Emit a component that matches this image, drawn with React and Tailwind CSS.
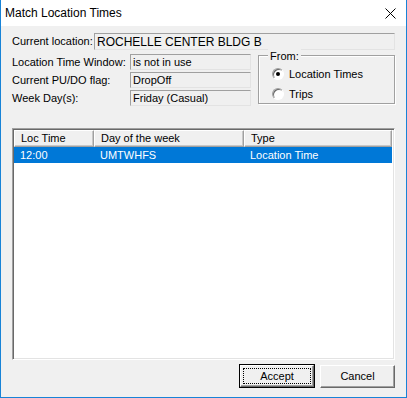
import React from 'react';

const font = { fontFamily: '"Liberation Sans", Arial, sans-serif' };

const Field = ({ value, className = '' }) => (
  <div className={`h-full border border-t-[#a0a0a0] border-l-[#a0a0a0] border-b-[#e3e3e3] border-r-[#e3e3e3] bg-[#f0f0f0] px-[2px] flex items-center leading-none ${className}`}>
    {value}
  </div>
);

const Radio = ({ checked, label }) => (
  <div className="flex items-center h-[16px]">
    <div className="w-[12px] h-[12px] rounded-full border border-t-[#a0a0a0] border-l-[#a0a0a0] border-b-white border-r-white bg-white shadow-[inset_1px_1px_0_#696969] flex items-center justify-center">
      {checked && <div className="w-[4px] h-[4px] rounded-full bg-black" />}
    </div>
    <span className="ml-[5px]">{label}</span>
  </div>
);

const HeaderCell = ({ label, className = '' }) => (
  <div className={`h-full border border-t-white border-l-white border-b-[#a0a0a0] border-r-[#a0a0a0] shadow-[inset_-1px_-1px_0_#c8c8c8] bg-[#f0f0f0] pl-[6px] flex items-center ${className}`}>
    {label}
  </div>
);

export default function App() {
  return (
    <div className="w-[407px] h-[398px] bg-[#f0f0f0] border-l border-r border-b border-[#1883d7] flex flex-col text-[11px] text-black" style={font}>
      <div className="h-[26px] bg-white flex items-center justify-between pl-[4px] pr-[10px] shrink-0">
        <span className="text-[12px]">Match Location Times</span>
        <svg width="11" height="11" viewBox="0 0 11 11">
          <path d="M0.5 0.5 L10.5 10.5 M10.5 0.5 L0.5 10.5" stroke="#000" strokeWidth="1" />
        </svg>
      </div>

      <div className="flex-1 flex flex-col px-[11px]">
        <div className="mt-[7px] h-[17px] flex items-center">
          <span className="w-[82px]">Current location:</span>
          <Field value="ROCHELLE CENTER BLDG B" className="flex-1 text-[12px]" />
        </div>

        <div className="mt-[4px] flex items-start">
          <div className="flex flex-col gap-[2px]">
            {[
              ['Location Time Window:', 'is not in use'],
              ['Current PU/DO flag:', 'DropOff'],
              ['Week Day(s):', 'Friday (Casual)'],
            ].map(([l, v]) => (
              <div key={l} className="h-[16px] flex items-center">
                <span className="w-[118px]">{l}</span>
                <Field value={v} className="w-[121px]" />
              </div>
            ))}
          </div>

          <div className="relative ml-[7px] mt-[1px] flex-1 h-[49px] border border-[#a0a0a0] shadow-[inset_1px_1px_0_#fff,1px_1px_0_#fff] pl-[13px] pt-[10px] flex flex-col gap-[4px]">
            <span className="absolute left-[9px] top-[-8px] bg-[#f0f0f0] px-[2px]">From:</span>
            <Radio checked label="Location Times" />
            <Radio label="Trips" />
          </div>
        </div>

        <div className="mt-[22px] h-[232px] border border-t-[#a0a0a0] border-l-[#a0a0a0] border-b-white border-r-white shadow-[inset_1px_1px_0_#696969,inset_-1px_-1px_0_#e3e3e3] p-[1px] flex flex-col">
          <div className="flex-1 bg-white flex flex-col pr-[1px] pb-[1px]">
            <div className="h-[17px] flex">
              <HeaderCell label="Loc Time" className="w-[80px]" />
              <HeaderCell label="Day of the week" className="w-[150px]" />
              <HeaderCell label="Type" className="flex-1" />
            </div>
            <div className="h-[16px] bg-[#0078d7] text-white flex items-center">
              <span className="w-[80px] pl-[6px]">12:00</span>
              <span className="w-[150px] pl-[6px]">UMTWHFS</span>
              <span className="pl-[6px]">Location Time</span>
            </div>
          </div>
        </div>

        <div className="mt-[4px] flex justify-end gap-[5px]">
          <button className="w-[76px] h-[24px] border border-black bg-[#f0f0f0] p-0 flex">
            <div className="flex-1 border border-t-white border-l-white border-b-[#696969] border-r-[#696969] shadow-[inset_-1px_-1px_0_#a0a0a0] p-[2px] flex">
              <div className="flex-1 border border-dotted border-black flex items-center justify-center">
                Accept
              </div>
            </div>
          </button>
          <button className="w-[75px] h-[23px] mt-[1px] border border-t-white border-l-white border-b-[#696969] border-r-[#696969] shadow-[inset_-1px_-1px_0_#a0a0a0] bg-[#f0f0f0] flex items-center justify-center">
            Cancel
          </button>
        </div>
      </div>
    </div>
  );
}
